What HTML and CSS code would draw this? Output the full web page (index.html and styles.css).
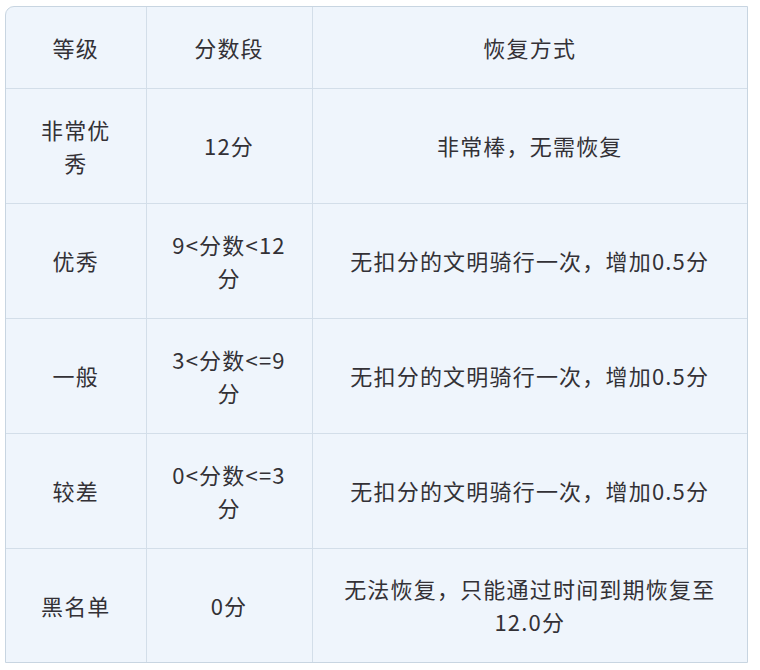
FILE: index.html
```html
<!DOCTYPE html>
<html lang="zh-CN">
<head>
<meta charset="utf-8">
<link rel="stylesheet" href="styles.css">
</head>
<body>
<div class="frame">
<table class="grade-table">
  <colgroup>
    <col class="c1"><col class="c2"><col class="c3">
  </colgroup>
  <thead>
    <tr class="head"><th>等级</th><th>分数段</th><th>恢复方式</th></tr>
  </thead>
  <tbody>
    <tr><td>非常优秀</td><td>12分</td><td>非常棒，无需恢复</td></tr>
    <tr><td>优秀</td><td class="score">9&lt;分数&lt;12分</td><td>无扣分的文明骑行一次，增加0.5分</td></tr>
    <tr><td>一般</td><td class="score">3&lt;分数&lt;=9分</td><td>无扣分的文明骑行一次，增加0.5分</td></tr>
    <tr><td>较差</td><td class="score">0&lt;分数&lt;=3分</td><td>无扣分的文明骑行一次，增加0.5分</td></tr>
    <tr class="last"><td>黑名单</td><td>0分</td><td>无法恢复，只能通过时间到期恢复至12.0分</td></tr>
  </tbody>
</table>
</div>
</body>
</html>
```
FILE: styles.css
```css
html, body {
  margin: 0;
  background: #ffffff;
}
body {
  padding: 6px 5px;
  font-family: "Noto Sans CJK SC", "Noto Sans", sans-serif;
  color: #333136;
}
.frame {
  width: 743px;
  box-sizing: border-box;
  border: 1px solid #c8d5e1;
  border-top-left-radius: 9px;
  overflow: hidden;
  background: #eff5fc;
}
.grade-table {
  width: 100%;
  table-layout: fixed;
  border-collapse: collapse;
  font-size: 22px;
  line-height: 33px;
  letter-spacing: 1.2px;
}
.c1 { width: 140px; }
.c2 { width: 166px; }
.grade-table th,
.grade-table td {
  text-align: center;
  vertical-align: middle;
  font-weight: 400;
  border-right: 1px solid #d3dee9;
  border-bottom: 1px solid #d3dee9;
  padding: 0 26px;
}
.grade-table td.score {
  padding: 0 18px;
}
.grade-table th:last-child,
.grade-table td:last-child {
  border-right: none;
}
.grade-table tr.last td {
  border-bottom: none;
}
.grade-table tr.head { height: 81px; }
.grade-table tbody tr { height: 115px; }
.grade-table tr.last { height: 114px; }
```
